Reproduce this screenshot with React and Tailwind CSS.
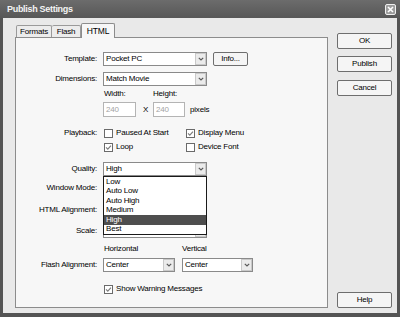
function Chevron() {
  return (
    <svg width="6" height="4" viewBox="0 0 6 4" className="block">
      <path d="M0.8 0.8 L3 3 L5.2 0.8" fill="none" stroke="#5a5a5a" strokeWidth="1.2" />
    </svg>
  );
}

function Select({ value, className = '' }) {
  return (
    <div className={`h-[14px] bg-white border border-[#8a8a8a] flex items-center pl-[2px] ${className}`}>
      <span className="flex-1 truncate">{value}</span>
      <div className="w-[11px] h-full bg-[#ebebeb] border border-[#c9c9c9] flex items-center justify-center">
        <Chevron />
      </div>
    </div>
  );
}

function Check({ checked, label }) {
  return (
    <div className="flex items-center gap-[3px]">
      <div className="w-[9px] h-[9px] border border-[#6a6a6a] bg-white flex items-center justify-center">
        {checked && (
          <svg width="7" height="7" viewBox="0 0 7 7" className="block">
            <path d="M1 3.4 L2.8 5.2 L6 1.6" fill="none" stroke="#7a7a7a" strokeWidth="1.1" />
          </svg>
        )}
      </div>
      <span>{label}</span>
    </div>
  );
}

// width and height come from the caller
function Btn({ children, className = '' }) {
  return (
    <button
      type="button"
      className={`rounded-[2px] border border-[#6e6e6e] bg-[#f5f5f5] flex items-center justify-center ${className}`}
    >
      {children}
    </button>
  );
}

function Row({ label, children, className = '' }) {
  return (
    <div className={`flex items-center ${className}`}>
      <div className="w-[81px] shrink-0 text-right">{label}</div>
      <div className="ml-[6px] flex items-center">{children}</div>
    </div>
  );
}

function Input({ value, className = '' }) {
  return (
    <div className={`h-[15px] bg-white border border-[#b4b4b4] flex items-center pl-[2px] text-[#a3a3a3] ${className}`}>
      {value}
    </div>
  );
}

const qualities = ['Low', 'Auto Low', 'Auto High', 'Medium', 'High', 'Best'];

export default function App() {
  return (
    <div className="w-[400px] h-[317px] flex flex-col bg-[#545454] px-[3px] pb-[4px] font-['Liberation_Sans',Arial,sans-serif] text-[8px] tracking-[-0.2px] leading-none text-black">
      {/* title bar */}
      <div className="h-[18px] -mx-[3px] pl-[7px] pr-[4px] flex items-center bg-gradient-to-b from-[#6c6c6c] to-[#575757]">
        <span className="text-[9px] font-bold tracking-[-0.3px] text-[#f4f4f4]">Publish Settings</span>
        <div className="ml-auto w-[11px] h-[11px] rounded-[2px] border border-[#f0f0f0] bg-[#9c9c9c] flex items-center justify-center">
          <svg width="7" height="7" viewBox="0 0 7 7" className="block">
            <path d="M1 1 L6 6 M6 1 L1 6" stroke="#ffffff" strokeWidth="1.6" />
          </svg>
        </div>
      </div>

      <div className="flex-1 bg-[#e9e9e9] flex pt-[5px] pl-[12px] pr-[5px] pb-[5px]">
        {/* tabs + panel */}
        <div className="w-[313px] flex flex-col">
          <div className="h-[14px] flex items-end pl-[1px]">
            <div className="w-[36px] h-[12px] border border-b-0 border-[#9a9a9a] bg-[#ececec] rounded-t-[2px] flex items-center justify-center">
              Formats
            </div>
            <div className="w-[29px] h-[12px] border border-b-0 border-l-0 border-[#9a9a9a] bg-[#ececec] rounded-t-[2px] flex items-center justify-center">
              Flash
            </div>
            <div className="relative z-10 w-[34px] h-[15px] -mb-[1px] border border-b-0 border-[#8c8c8c] bg-[#f7f7f7] rounded-t-[2px] flex items-center justify-center text-[8.5px]">
              HTML
            </div>
          </div>
          <div className="flex-1 border border-[#8c8c8c] bg-[#f7f7f7] flex flex-col pt-[14px]">
            <Row label="Template:">
              <Select value="Pocket PC" className="w-[104px]" />
              <Btn className="ml-[6px] w-[35px] h-[14px] -mt-[1px]">Info...</Btn>
            </Row>
            <Row label="Dimensions:" className="mt-[6px]">
              <Select value="Match Movie" className="w-[104px]" />
            </Row>
            <Row label="" className="mt-[3px] h-[10px]">
              <span className="ml-[1px] w-[49px]">Width:</span>
              <span>Height:</span>
            </Row>
            <Row label="" className="mt-[3px]">
              <Input value="240" className="w-[33px]" />
              <span className="ml-[7px] w-[10px]">X</span>
              <Input value="240" className="w-[32px]" />
              <span className="ml-[5px]">pixels</span>
            </Row>
            <Row label="Playback:" className="mt-[11px] h-[10px]">
              <div className="ml-[1px] w-[82px]">
                <Check label="Paused At Start" />
              </div>
              <Check checked label="Display Menu" />
            </Row>
            <Row label="" className="mt-[4px] h-[10px]">
              <div className="ml-[1px] w-[82px]">
                <Check checked label="Loop" />
              </div>
              <Check label="Device Font" />
            </Row>
            <Row label="Quality:" className="mt-[10px]">
              <div className="relative">
                <Select value="High" className="w-[104px]" />
                <div className="absolute z-20 left-0 top-[14px] w-[104px] border border-[#1a1a1a] bg-white flex flex-col">
                  {qualities.map((q, i) => (
                    <div
                      key={q}
                      className={`h-[9.5px] flex items-center pl-[2px] ${i === 4 ? 'bg-[#4e4e4e] text-white' : ''}`}
                    >
                      {q}
                    </div>
                  ))}
                </div>
              </div>
            </Row>
            {/* these three sit under the open list */}
            <Row label="Window Mode:" className="mt-[5px]">
              <Select value="" className="w-[104px]" />
            </Row>
            <Row label="HTML Alignment:" className="mt-[8px]">
              <Select value="" className="w-[104px]" />
            </Row>
            <Row label="Scale:" className="mt-[7px]">
              <Select value="" className="w-[104px]" />
            </Row>
            <Row label="" className="mt-[6px] h-[10px]">
              <span className="ml-[1px] w-[78px]">Horizontal</span>
              <span>Vertical</span>
            </Row>
            <Row label="Flash Alignment:" className="mt-[4px]">
              <Select value="Center" className="w-[72px]" />
              <Select value="Center" className="ml-[7px] w-[71px]" />
            </Row>
            <Row label="" className="mt-[12px] h-[10px]">
              <div className="ml-[1px]">
                <Check checked label="Show Warning Messages" />
              </div>
            </Row>
          </div>
        </div>

        {/* buttons */}
        <div className="ml-[9px] flex flex-col pt-[10px]">
          <Btn className="w-[55px] h-[16px]">OK</Btn>
          <Btn className="w-[55px] h-[16px] mt-[7px]">Publish</Btn>
          <Btn className="w-[55px] h-[16px] mt-[8px]">Cancel</Btn>
          <Btn className="w-[55px] h-[16px] mt-auto">Help</Btn>
        </div>
      </div>
    </div>
  );
}
